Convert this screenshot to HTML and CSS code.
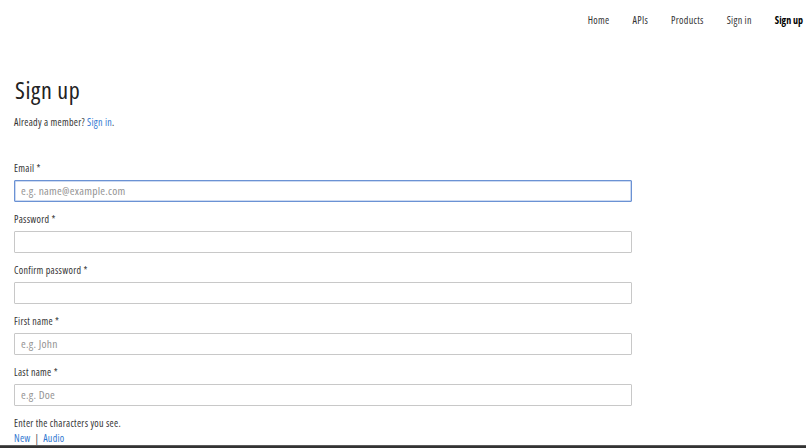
FILE: index.html
```html
<!DOCTYPE html>
<html lang="en">
<head>
<meta charset="utf-8">
<title>Sign up</title>
<link rel="stylesheet" href="styles.css">
</head>
<body>
<header class="topbar">
  <nav class="nav">
    <a class="nav-link" href="#">Home</a>
    <a class="nav-link" href="#">APIs</a>
    <a class="nav-link" href="#">Products</a>
    <a class="nav-link" href="#">Sign in</a>
    <a class="nav-link nav-active" href="#">Sign up</a>
  </nav>
</header>
<main class="page">
  <h1 class="title">Sign up</h1>
  <p class="intro">Already a member? <a class="link" href="#">Sign in</a>.</p>
  <form class="form">
    <div class="field">
      <label class="label">Email *</label>
      <input class="input input-focus" type="text" placeholder="e.g. name@example.com">
    </div>
    <div class="field">
      <label class="label">Password *</label>
      <input class="input" type="password">
    </div>
    <div class="field">
      <label class="label">Confirm password *</label>
      <input class="input" type="password">
    </div>
    <div class="field">
      <label class="label">First name *</label>
      <input class="input" type="text" placeholder="e.g. John">
    </div>
    <div class="field">
      <label class="label">Last name *</label>
      <input class="input" type="text" placeholder="e.g. Doe">
    </div>
    <div class="captcha">
      <p class="label">Enter the characters you see.</p>
      <p class="captcha-links"><a class="link" href="#">New</a> <span class="sep">|</span> <a class="link" href="#">Audio</a></p>
    </div>
  </form>
</main>
<footer class="footer"></footer>
</body>
</html>
```
FILE: styles.css
```css
html, body {
  margin: 0;
  padding: 0;
  background: #fff;
}
body {
  font-family: "Open Sans", "Liberation Sans", sans-serif;
  font-stretch: 75%;
  letter-spacing: 0.28px;
  color: #333;
  height: 448px;
  overflow: hidden;
  display: flex;
  flex-direction: column;
}
.topbar {
  box-sizing: border-box;
  height: 40px;
  padding: 8px 3px 0 0;
  display: flex;
  justify-content: flex-end;
  align-items: center;
}
.nav {
  display: flex;
  gap: 23px;
}
.nav-link {
  font-size: 10px;
  line-height: 14px;
  letter-spacing: 0.3px;
  color: #333;
  text-decoration: none;
}
.nav-active {
  font-weight: 700;
  letter-spacing: 0;
  color: #000;
}
.page {
  padding: 42px 0 0 14px;
  flex: 1;
}
.title {
  margin: 0 0 0 1px;
  font-size: 24px;
  line-height: 29px;
  font-weight: 400;
  letter-spacing: 0.6px;
  color: #222;
}
.intro {
  margin: 11px 0 0;
  font-size: 10px;
  line-height: 14px;
}
.link {
  color: #2f77d1;
  text-decoration: none;
}
.form {
  margin-top: 32px;
  display: flex;
  flex-direction: column;
  gap: 10px;
  width: 618px;
}
.field {
  display: flex;
  flex-direction: column;
  gap: 5px;
}
.label {
  display: block;
  margin: 0;
  font-size: 10px;
  line-height: 14px;
  color: #333;
}
.input {
  box-sizing: border-box;
  height: 22px;
  width: 618px;
  margin: 0;
  padding: 0 6px;
  border: 1px solid #c8c8c8;
  border-radius: 1px;
  font-family: inherit;
  font-stretch: 75%;
  font-size: 11.5px;
  letter-spacing: 0.25px;
  color: #222;
  background: #fff;
  outline: none;
}
.input::placeholder {
  color: #949494;
}
.input-focus {
  border-color: #6b92d4;
  box-shadow: inset 0 0 0 0.5px #9bb6e4;
}
.captcha {
  display: flex;
  flex-direction: column;
  gap: 1px;
}
.captcha-links {
  margin: 0;
  font-size: 10px;
  line-height: 14px;
}
.sep {
  color: #444;
  margin: 0 2px;
}
.footer {
  height: 4px;
  background: #333;
  border-top: 1px solid #5a5a5a;
  box-sizing: border-box;
}
```
